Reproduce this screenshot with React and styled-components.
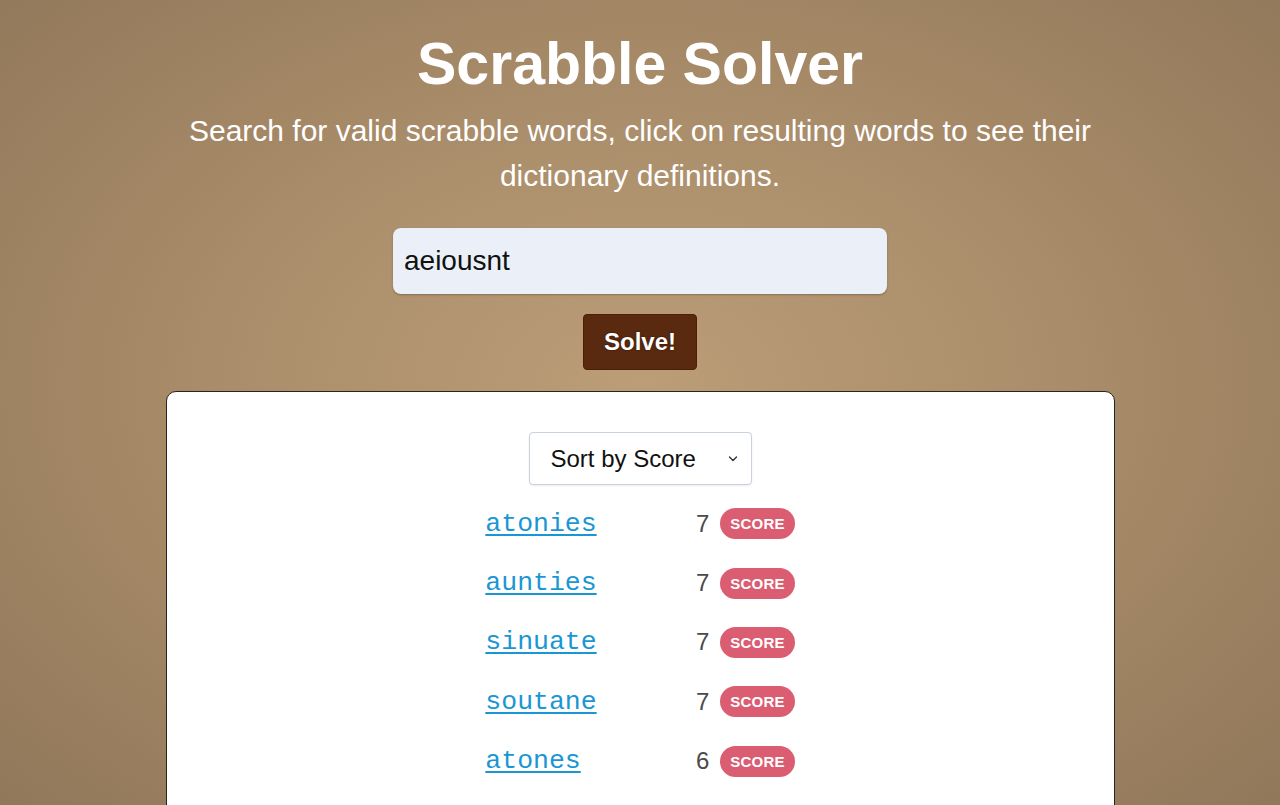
import React, { useState } from "react";
import styled, { createGlobalStyle } from "styled-components";

const GlobalStyle = createGlobalStyle`
  html, body {
    margin: 0;
    padding: 0;
  }
  body {
    font-family: "Liberation Sans", Arial, sans-serif;
    background: radial-gradient(ellipse 75% 80% at 50% 48%, #bb9e78 0%, #a98c69 45%, #8d7558 100%);
    background-attachment: fixed;
    min-height: 100vh;
  }
`;

const Page = styled.main`
  display: flex;
  flex-direction: column;
  align-items: center;
  min-height: 100vh;
  padding-top: 28px;
  box-sizing: border-box;
`;

const Title = styled.h1`
  margin: 0;
  font-size: 59px;
  line-height: 72px;
  font-weight: 700;
  color: #fff;
`;

const Subtitle = styled.p`
  margin: 8px 0 0;
  max-width: 920px;
  text-align: center;
  font-size: 30px;
  line-height: 45px;
  color: #fff;
`;

const SearchForm = styled.form`
  display: flex;
  flex-direction: column;
  align-items: center;
  margin-top: 30px;
`;

const LetterInput = styled.input`
  width: 494px;
  height: 66px;
  box-sizing: border-box;
  padding: 0 11px;
  border: none;
  border-radius: 8px;
  background: #ebf0f8;
  box-shadow: 0 1px 2px rgba(60, 40, 20, 0.35);
  font-family: "Liberation Sans", Arial, sans-serif;
  font-size: 28px;
  color: #111;
  outline: none;
`;

const SolveButton = styled.button`
  margin-top: 20px;
  width: 114px;
  height: 56px;
  border: 1px solid #4a1e08;
  border-radius: 4px;
  background: #5a2a10;
  color: #fff;
  font-family: "Liberation Sans", Arial, sans-serif;
  font-size: 24px;
  font-weight: 700;
  text-shadow: 0 0 2px #2a0e02;
  cursor: pointer;
`;

const ResultsCard = styled.section`
  margin-top: 21px;
  width: 949px;
  box-sizing: border-box;
  background: #fff;
  border: 1px solid #2a2420;
  border-radius: 10px;
  padding: 40px 0 30px;
  display: flex;
  flex-direction: column;
  align-items: center;
`;

const SortSelectWrap = styled.div`
  position: relative;
  width: 223px;
  height: 53px;
`;

const SortSelect = styled.select`
  appearance: none;
  width: 100%;
  height: 100%;
  box-sizing: border-box;
  padding: 0 0 0 21px;
  border: 1px solid #c9d1dd;
  border-radius: 4px;
  background: #fff;
  box-shadow: 0 1px 2px rgba(0, 0, 0, 0.08);
  font-family: "Liberation Sans", Arial, sans-serif;
  font-size: 24px;
  color: #111;
`;

const Chevron = styled.svg`
  position: absolute;
  right: 14px;
  top: 50%;
  transform: translateY(-50%);
  pointer-events: none;
`;

const WordList = styled.ul`
  list-style: none;
  margin: 9px 0 0;
  padding: 0;
  display: flex;
  flex-direction: column;
`;

const WordRow = styled.li`
  display: flex;
  align-items: center;
  height: 59.4px;
`;

const WordLink = styled.a`
  width: 210px;
  font-family: "Liberation Mono", "Courier New", monospace;
  font-size: 26.5px;
  color: #1a96d4;
  text-decoration: underline;
  text-underline-offset: 3px;
  cursor: pointer;
`;

const ScoreValue = styled.span`
  width: 14px;
  text-align: right;
  font-size: 24px;
  color: #4a4a4a;
`;

const ScoreBadge = styled.span`
  margin-left: 11px;
  display: inline-flex;
  align-items: center;
  justify-content: center;
  height: 31px;
  padding: 0 10px;
  border-radius: 16px;
  background: #db5d72;
  color: #fff;
  font-size: 15px;
  font-weight: 700;
  letter-spacing: 0.2px;
`;

const words = [
  { word: "atonies", score: 7 },
  { word: "aunties", score: 7 },
  { word: "sinuate", score: 7 },
  { word: "soutane", score: 7 },
  { word: "atones", score: 6 },
  { word: "atonies", score: 6 },
];

export default function App() {
  const [letters, setLetters] = useState("aeiousnt");
  const [sort, setSort] = useState("score");

  return (
    <>
      <GlobalStyle />
      <Page>
        <Title>Scrabble Solver</Title>
        <Subtitle>
          Search for valid scrabble words, click on resulting words to see their
          dictionary definitions.
        </Subtitle>
        <SearchForm onSubmit={(e) => e.preventDefault()}>
          <LetterInput
            value={letters}
            onChange={(e) => setLetters(e.target.value)}
          />
          <SolveButton type="submit">Solve!</SolveButton>
        </SearchForm>
        <ResultsCard>
          <SortSelectWrap>
            <SortSelect value={sort} onChange={(e) => setSort(e.target.value)}>
              <option value="score">Sort by Score</option>
              <option value="alpha">Sort A-Z</option>
              <option value="length">Sort by Length</option>
            </SortSelect>
            <Chevron width="10" height="7" viewBox="0 0 10 7">
              <path
                d="M1.5 1.5 L5 5 L8.5 1.5"
                fill="none"
                stroke="#333"
                strokeWidth="1.4"
                strokeLinecap="round"
                strokeLinejoin="round"
              />
            </Chevron>
          </SortSelectWrap>
          <WordList>
            {words.map((w, i) => (
              <WordRow key={i}>
                <WordLink>{w.word}</WordLink>
                <ScoreValue>{w.score}</ScoreValue>
                <ScoreBadge>SCORE</ScoreBadge>
              </WordRow>
            ))}
          </WordList>
        </ResultsCard>
      </Page>
    </>
  );
}
